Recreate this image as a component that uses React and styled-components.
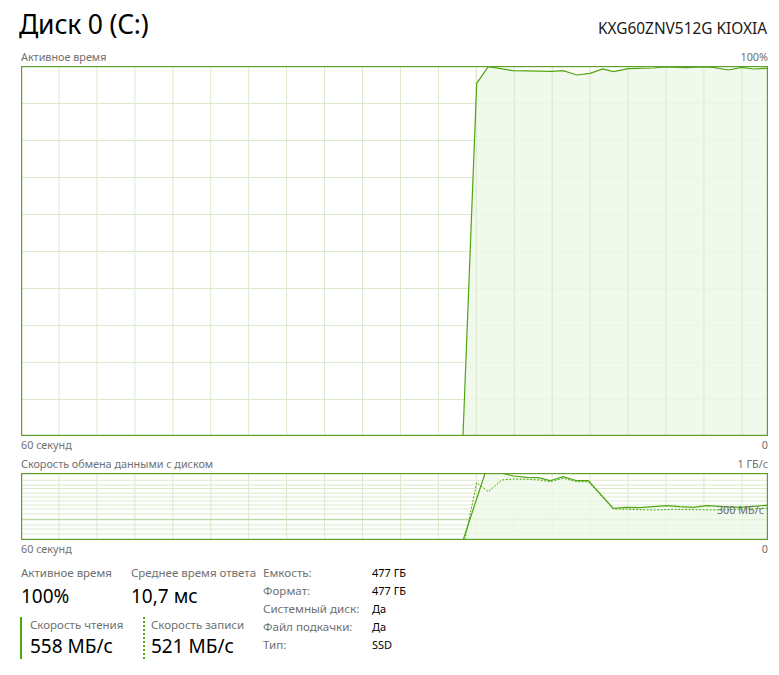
import React from "react";
import styled, { createGlobalStyle } from "styled-components";

const GlobalStyle = createGlobalStyle`
    body {
        margin: 0;
        background: #ffffff;
        font-family: "Noto Sans", "Open Sans", sans-serif;
        color: #000000;
    }
`;

const GREEN = "#5f9f2e";
const LINE = "#4ea60f";
const GRID = "#dbeacd";
const FILL = "#eff7e9";

const Page = styled.div`
    width: 779px;
    height: 675px;
    box-sizing: border-box;
    padding: 0 11px 0 21px;
    overflow: hidden;
`;

const Header = styled.div`
    height: 50px;
    display: flex;
    justify-content: space-between;
    align-items: baseline;
    box-sizing: border-box;
    padding-top: 7px;
`;

const Title = styled.div`
    font-size: 26.5px;
    line-height: 34px;
    margin-left: -2px;
    letter-spacing: -0.2px;
`;

const Model = styled.div`
    font-size: 15.4px;
    line-height: 20px;
    color: #1a1a1a;
    margin-right: 1px;
`;

const AxisRow = styled.div`
    display: flex;
    justify-content: space-between;
    font-size: 10.8px;
    line-height: 14px;
    color: #707070;
    margin-top: ${(p) => p.$top || 0}px;
    margin-bottom: ${(p) => p.$bottom || 0}px;
`;

const ChartBox = styled.div`
    position: relative;
    height: ${(p) => p.$h}px;
`;

const Chart = styled.svg`
    display: block;
`;

const ScaleMark = styled.span`
    position: absolute;
    right: 4px;
    top: 30px;
    font-size: 10.8px;
    line-height: 14px;
    color: #6a6a6a;
`;

const Stats = styled.div`
    display: flex;
    margin-top: 9px;
`;

const StatsLeft = styled.div`
    width: 242px;
`;

const StatRow = styled.div`
    display: flex;
`;

const Stat = styled.div`
    width: ${(p) => p.$w}px;
`;

const StatLabel = styled.div`
    font-size: 11.5px;
    line-height: 16px;
    color: #707070;
    white-space: nowrap;
`;

const StatValue = styled.div`
    font-size: 19px;
    line-height: 26px;
    margin-top: 2px;
    white-space: nowrap;
`;

const RateRow = styled.div`
    display: flex;
    margin-top: 8px;
    margin-left: -1px;
`;

const Rate = styled.div`
    width: ${(p) => p.$w}px;
    box-sizing: border-box;
    height: 42px;
    padding-left: ${(p) => p.$pad}px;
    border-left: 2px ${(p) => (p.$dotted ? "dotted" : "solid")} ${LINE};
`;

const RateValue = styled(StatValue)`
    margin-top: 0;
    line-height: 26px;
`;

const InfoTable = styled.div`
    display: grid;
    grid-template-columns: 109px auto;
    grid-auto-rows: 18px;
    font-size: 11.6px;
    line-height: 18px;
    margin-top: -1px;
`;

const InfoKey = styled.div`
    color: #707070;
`;

const InfoVal = styled.div`
    color: #000000;
    font-size: 11px;
`;

const W = 747;

const toPts = (pts) => pts.map(([x, y]) => `${x},${y}`).join(" ");

const vGrid = Array.from({ length: 19 }, (_, k) => 38 + 37.94 * k);

const activePts = [
    [0, 369.5], [442, 369.5], [455.7, 17.3], [467.3, 0.7], [492.3, 4.7], [530.7, 5.3],
    [542.3, 4.7], [555.7, 9], [569, 7.3], [581.7, 3], [592.3, 5.7], [607.3, 2.7],
    [632.3, 2], [644, 1], [665.7, 1.7], [682.3, 1], [692.3, 1.3], [707.3, 4],
    [720.7, 1.3], [732.3, 3], [746, 2.3],
];

const readPts = [
    [442.3, 66.5], [464, 0.5], [482.3, 0.5], [492.3, 3], [505.7, 4.3], [517.3, 4.7],
    [529, 7.7], [542.3, 3.7], [555.7, 7.7], [567.3, 7.7], [592.3, 35.3], [605.7, 34.3],
    [619, 34.7], [645.7, 32.7], [659, 33.7], [672.3, 34.3], [685.7, 32.7], [702.3, 33.7],
    [719, 34.3], [732.3, 33.3], [746, 32.3],
];

const writePts = [
    [444, 66.5], [455.7, 9.7], [467.3, 18.7], [480.7, 7], [492.3, 6], [505.7, 6.3],
    [519, 7], [529, 8.7], [542.3, 5.3], [555.7, 8.7], [567.3, 8.7], [592.3, 36],
    [605.7, 36.3], [632.3, 37], [652.3, 36.3], [695.7, 37], [746, 35.3],
];

const ActiveChart = () => {
    const H = 370;
    return (
        <Chart width={W} height={H}>
            {vGrid.map((x) => (
                <line key={x} x1={x} x2={x} y1={0} y2={H} stroke={GRID} strokeWidth="1" />
            ))}
            {Array.from({ length: 9 }, (_, k) => 37 * (k + 1) + 0.5).map((y) => (
                <line key={y} x1={0} x2={W} y1={y} y2={y} stroke={GRID} strokeWidth="1" />
            ))}
            <polygon points={toPts([...activePts.slice(1), [746, 369.5]])} fill={FILL} opacity="0.85" />
            {vGrid.filter((x) => x > 455).map((x) => (
                <line key={"o" + x} x1={x} x2={x} y1={2} y2={H} stroke={GRID} strokeWidth="1" />
            ))}
            <polyline points={toPts(activePts)} fill="none" stroke={LINE} strokeWidth="1.2" />
            <rect x="0.5" y="0.5" width={W - 1} height={H - 1} fill="none" stroke={GREEN} strokeWidth="1.4" />
        </Chart>
    );
};

const TransferChart = () => {
    const H = 67;
    const hLines = [7.3, 12, 15.5, 20, 24, 28, 32, 36, 41, 46.5, 52, 56, 61];
    return (
        <Chart width={W} height={H}>
            {vGrid.map((x) => (
                <line key={x} x1={x} x2={x} y1={0} y2={H} stroke={GRID} strokeWidth="1" />
            ))}
            {hLines.map((y) => (
                <line
                    key={y}
                    x1={0}
                    x2={W}
                    y1={y}
                    y2={y}
                    stroke={y === 46.5 ? "#bcdaa5" : GRID}
                    strokeWidth={y === 46.5 ? 1.6 : 1}
                />
            ))}
            <polygon points={toPts([...readPts, [746, 66.5]])} fill={FILL} opacity="0.8" />
            <polyline points={toPts(writePts)} fill="none" stroke={LINE} strokeWidth="1" strokeDasharray="2 1.5" />
            <polyline points={toPts(readPts)} fill="none" stroke={LINE} strokeWidth="1.2" />
            <rect x="0.5" y="0.5" width={W - 1} height={H - 1} fill="none" stroke={GREEN} strokeWidth="1.4" />
        </Chart>
    );
};

const info = [
    ["Емкость:", "477 ГБ"],
    ["Формат:", "477 ГБ"],
    ["Системный диск:", "Да"],
    ["Файл подкачки:", "Да"],
    ["Тип:", "SSD"],
];

const App = () => {
    return (
        <>
            <GlobalStyle />
            <Page>
                <Header>
                    <Title>Диск 0 (C:)</Title>
                    <Model>KXG60ZNV512G KIOXIA</Model>
                </Header>
                <AxisRow $bottom={2}>
                    <span>Активное время</span>
                    <span>100%</span>
                </AxisRow>
                <ChartBox $h={370}>
                    <ActiveChart />
                </ChartBox>
                <AxisRow $top={2}>
                    <span>60 секунд</span>
                    <span>0</span>
                </AxisRow>
                <AxisRow $top={5} $bottom={2}>
                    <span>Скорость обмена данными с диском</span>
                    <span>1 ГБ/с</span>
                </AxisRow>
                <ChartBox $h={67}>
                    <TransferChart />
                    <ScaleMark>300 МБ/с</ScaleMark>
                </ChartBox>
                <AxisRow $top={2}>
                    <span>60 секунд</span>
                    <span>0</span>
                </AxisRow>
                <Stats>
                    <StatsLeft>
                        <StatRow>
                            <Stat $w={110}>
                                <StatLabel>Активное время</StatLabel>
                                <StatValue>100%</StatValue>
                            </Stat>
                            <Stat $w={130}>
                                <StatLabel>Среднее время ответа</StatLabel>
                                <StatValue>10,7 мс</StatValue>
                            </Stat>
                        </StatRow>
                        <RateRow>
                            <Rate $w={123} $pad={8}>
                                <StatLabel>Скорость чтения</StatLabel>
                                <RateValue>558 МБ/с</RateValue>
                            </Rate>
                            <Rate $w={120} $pad={6} $dotted>
                                <StatLabel>Скорость записи</StatLabel>
                                <RateValue>521 МБ/с</RateValue>
                            </Rate>
                        </RateRow>
                    </StatsLeft>
                    <InfoTable>
                        {info.map(([k, v]) => (
                            <React.Fragment key={k}>
                                <InfoKey>{k}</InfoKey>
                                <InfoVal>{v}</InfoVal>
                            </React.Fragment>
                        ))}
                    </InfoTable>
                </Stats>
            </Page>
        </>
    );
};

export default App;
